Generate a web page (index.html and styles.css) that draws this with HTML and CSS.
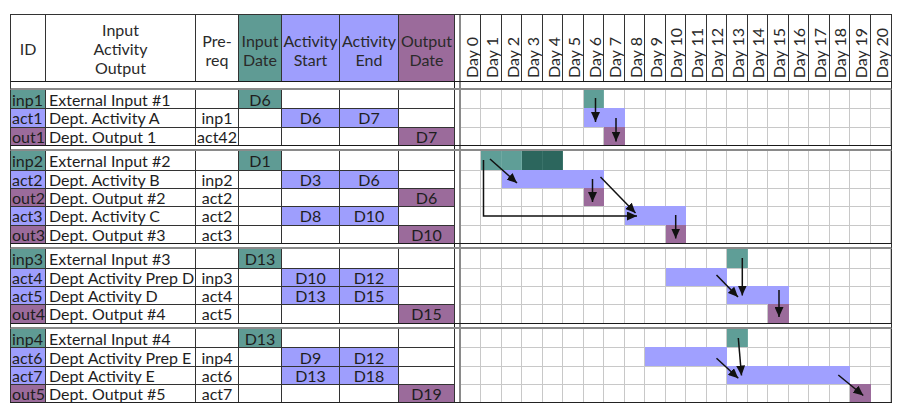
FILE: index.html
```html
<!DOCTYPE html>
<html lang="en">
<head>
<meta charset="utf-8">
<title>Department schedule</title>
<link rel="stylesheet" href="styles.css">
</head>
<body>
<div class="sheet">
  <div class="hrow">
    <div class="h">ID</div>
    <div class="h">Input<br>Activity<br>Output</div>
    <div class="h h2">Pre-<br>req</div>
    <div class="h h2 in">Input<br>Date</div>
    <div class="h h2 act">Activity<br>Start</div>
    <div class="h h2 act">Activity<br>End</div>
    <div class="h h2 out">Output<br>Date</div>
    <div class="gap hgap"></div>
    <div class="hdays">
      <div class="dh"><span>Day 0</span></div>
      <div class="dh"><span>Day 1</span></div>
      <div class="dh"><span>Day 2</span></div>
      <div class="dh"><span>Day 3</span></div>
      <div class="dh"><span>Day 4</span></div>
      <div class="dh"><span>Day 5</span></div>
      <div class="dh"><span>Day 6</span></div>
      <div class="dh"><span>Day 7</span></div>
      <div class="dh"><span>Day 8</span></div>
      <div class="dh"><span>Day 9</span></div>
      <div class="dh"><span>Day 10</span></div>
      <div class="dh"><span>Day 11</span></div>
      <div class="dh"><span>Day 12</span></div>
      <div class="dh"><span>Day 13</span></div>
      <div class="dh"><span>Day 14</span></div>
      <div class="dh"><span>Day 15</span></div>
      <div class="dh"><span>Day 16</span></div>
      <div class="dh"><span>Day 17</span></div>
      <div class="dh"><span>Day 18</span></div>
      <div class="dh"><span>Day 19</span></div>
      <div class="dh"><span>Day 20</span></div>
    </div>
  </div>
  <div class="sep hsep"><div class="sl"></div><div class="sg"></div><div></div></div>

  <div class="sec">
    <div class="row">
      <div class="c id in">inp1</div><div class="c name">External Input #1</div><div class="c"></div>
      <div class="c in">D6</div><div class="c"></div><div class="c"></div><div class="c"></div>
      <div class="gap"></div>
      <div class="days"><span class="bar t" style="grid-column:7 / span 1"></span></div>
    </div>
    <div class="row">
      <div class="c id act">act1</div><div class="c name">Dept. Activity A</div><div class="c">inp1</div>
      <div class="c"></div><div class="c act">D6</div><div class="c act">D7</div><div class="c"></div>
      <div class="gap"></div>
      <div class="days"><span class="bar a" style="grid-column:7 / span 2"></span></div>
    </div>
    <div class="row">
      <div class="c id out">out1</div><div class="c name">Dept. Output 1</div><div class="c">act42</div>
      <div class="c"></div><div class="c"></div><div class="c"></div><div class="c out">D7</div>
      <div class="gap"></div>
      <div class="days"><span class="bar o" style="grid-column:8 / span 1"></span></div>
    </div>
  </div>
  <div class="sep"><div class="sl"></div><div class="sg"></div><div></div></div>

  <div class="sec">
    <div class="row">
      <div class="c id in">inp2</div><div class="c name">External Input #2</div><div class="c"></div>
      <div class="c in">D1</div><div class="c"></div><div class="c"></div><div class="c"></div>
      <div class="gap"></div>
      <div class="days"><span class="bar t" style="grid-column:2 / span 1"></span><span class="bar t" style="grid-column:3 / span 1"></span><span class="bar dt" style="grid-column:4 / span 1"></span><span class="bar dt" style="grid-column:5 / span 1"></span></div>
    </div>
    <div class="row">
      <div class="c id act">act2</div><div class="c name">Dept. Activity B</div><div class="c">inp2</div>
      <div class="c"></div><div class="c act">D3</div><div class="c act">D6</div><div class="c"></div>
      <div class="gap"></div>
      <div class="days"><span class="bar a" style="grid-column:3 / span 5"></span></div>
    </div>
    <div class="row">
      <div class="c id out">out2</div><div class="c name">Dept. Output #2</div><div class="c">act2</div>
      <div class="c"></div><div class="c"></div><div class="c"></div><div class="c out">D6</div>
      <div class="gap"></div>
      <div class="days"><span class="bar o" style="grid-column:7 / span 1"></span></div>
    </div>
    <div class="row">
      <div class="c id act">act3</div><div class="c name">Dept. Activity C</div><div class="c">act2</div>
      <div class="c"></div><div class="c act">D8</div><div class="c act">D10</div><div class="c"></div>
      <div class="gap"></div>
      <div class="days"><span class="bar a" style="grid-column:9 / span 3"></span></div>
    </div>
    <div class="row">
      <div class="c id out">out3</div><div class="c name">Dept. Output #3</div><div class="c">act3</div>
      <div class="c"></div><div class="c"></div><div class="c"></div><div class="c out">D10</div>
      <div class="gap"></div>
      <div class="days"><span class="bar o" style="grid-column:11 / span 1"></span></div>
    </div>
  </div>
  <div class="sep"><div class="sl"></div><div class="sg"></div><div></div></div>

  <div class="sec">
    <div class="row">
      <div class="c id in">inp3</div><div class="c name">External Input #3</div><div class="c"></div>
      <div class="c in">D13</div><div class="c"></div><div class="c"></div><div class="c"></div>
      <div class="gap"></div>
      <div class="days"><span class="bar t" style="grid-column:14 / span 1"></span></div>
    </div>
    <div class="row">
      <div class="c id act">act4</div><div class="c name">Dept Activity Prep D</div><div class="c">inp3</div>
      <div class="c"></div><div class="c act">D10</div><div class="c act">D12</div><div class="c"></div>
      <div class="gap"></div>
      <div class="days"><span class="bar a" style="grid-column:11 / span 3"></span></div>
    </div>
    <div class="row">
      <div class="c id act">act5</div><div class="c name">Dept Activity D</div><div class="c">act4</div>
      <div class="c"></div><div class="c act">D13</div><div class="c act">D15</div><div class="c"></div>
      <div class="gap"></div>
      <div class="days"><span class="bar a" style="grid-column:14 / span 3"></span></div>
    </div>
    <div class="row">
      <div class="c id out">out4</div><div class="c name">Dept. Output #4</div><div class="c">act5</div>
      <div class="c"></div><div class="c"></div><div class="c"></div><div class="c out">D15</div>
      <div class="gap"></div>
      <div class="days"><span class="bar o" style="grid-column:16 / span 1"></span></div>
    </div>
  </div>
  <div class="sep"><div class="sl"></div><div class="sg"></div><div></div></div>

  <div class="sec last">
    <div class="row">
      <div class="c id in">inp4</div><div class="c name">External Input #4</div><div class="c"></div>
      <div class="c in">D13</div><div class="c"></div><div class="c"></div><div class="c"></div>
      <div class="gap"></div>
      <div class="days"><span class="bar t" style="grid-column:14 / span 1"></span></div>
    </div>
    <div class="row">
      <div class="c id act">act6</div><div class="c name">Dept Activity Prep E</div><div class="c">inp4</div>
      <div class="c"></div><div class="c act">D9</div><div class="c act">D12</div><div class="c"></div>
      <div class="gap"></div>
      <div class="days"><span class="bar a" style="grid-column:10 / span 4"></span></div>
    </div>
    <div class="row">
      <div class="c id act">act7</div><div class="c name">Dept Activity E</div><div class="c">act6</div>
      <div class="c"></div><div class="c act">D13</div><div class="c act">D18</div><div class="c"></div>
      <div class="gap"></div>
      <div class="days"><span class="bar a" style="grid-column:14 / span 6"></span></div>
    </div>
    <div class="row">
      <div class="c id out">out5</div><div class="c name">Dept. Output #5</div><div class="c">act7</div>
      <div class="c"></div><div class="c"></div><div class="c"></div><div class="c out">D19</div>
      <div class="gap"></div>
      <div class="days"><span class="bar o" style="grid-column:20 / span 1"></span></div>
    </div>
  </div>
</div>

<svg class="arrows" width="900" height="416" viewBox="0 0 900 416" aria-hidden="true">
  <defs>
    <marker id="ah" markerUnits="userSpaceOnUse" markerWidth="10" markerHeight="9" refX="10" refY="4.5" orient="auto">
      <path d="M0,0 L10,4.5 L0,9 Z" fill="#111"/>
    </marker>
  </defs>
  <g stroke="#111" stroke-width="1.5" fill="none" marker-end="url(#ah)">
    <line x1="595.5" y1="98" x2="595.5" y2="122"/>
    <line x1="616" y1="118" x2="616" y2="141.5"/>
    <line x1="490" y1="159" x2="517" y2="183"/>
    <polyline points="483.5,160 483.5,216 637,216"/>
    <line x1="592.5" y1="179" x2="592.5" y2="202"/>
    <line x1="600.5" y1="177" x2="635.5" y2="213"/>
    <line x1="675.7" y1="215" x2="675.7" y2="238.5"/>
    <line x1="742.3" y1="258" x2="742.3" y2="295.5"/>
    <line x1="716.5" y1="275" x2="738" y2="297"/>
    <line x1="779" y1="290" x2="779" y2="317"/>
    <line x1="738.3" y1="338" x2="741.5" y2="375.5"/>
    <line x1="716.5" y1="358.3" x2="738.3" y2="378.3"/>
    <line x1="838.3" y1="375" x2="863.3" y2="395.5"/>
  </g>
</svg>
</body>
</html>
```

FILE: styles.css
```css
* { box-sizing: border-box; }

body {
  margin: 0;
  padding: 14px 0 0 10px;
  width: 900px;
  height: 416px;
  overflow: hidden;
  position: relative;
  background: #ffffff;
  font-family: Lato, "Open Sans", sans-serif;
  font-size: 16px;
  color: #1e1e1e;
}

.sheet { width: 882px; }

.hrow,
.row {
  display: grid;
  grid-template-columns: 35px 150px 43px 43px 58px 59px 56px 6px 1fr;
  border-left: 1px solid #333;
  border-right: 1px solid #333;
}

.hrow {
  height: 67px;
  border-top: 1px solid #333;
}

.row { height: 18.3px; }

/* header */
.h {
  border-right: 1px solid #333;
  display: flex;
  align-items: center;
  justify-content: center;
  text-align: center;
  line-height: 19px;
  color: #2a2a2a;
}
.h2 { padding-top: 3px; }

.hgap { border-right-color: #555; }

.hdays {
  display: grid;
  grid-template-columns: repeat(21, 1fr);
}
.dh {
  border-right: 1px solid #333;
  display: flex;
  align-items: flex-end;
  justify-content: center;
  padding: 0 0 3px 2px;
  color: #2a2a2a;
}
.dh:last-child { border-right: 0; }
.dh span {
  writing-mode: vertical-rl;
  transform: rotate(180deg);
  line-height: 1;
  white-space: nowrap;
}

/* separators */
.sep {
  display: grid;
  grid-template-columns: 444px 6px 1fr;
  height: 6.5px;
  border-left: 1px solid #333;
  border-right: 1px solid #333;
  border-top: 1px solid #1a1a1a;
  border-bottom: 2px solid #8a8a8a;
}
.hsep { height: 9px; }
.sl { border-right: 1px solid #1a1a1a; }
.sg { border-right: 2px solid #8a8a8a; }

/* body cells */
.c {
  border-right: 1px solid #333;
  border-top: 1px solid #333;
  display: flex;
  align-items: center;
  justify-content: center;
  line-height: 1;
  white-space: nowrap;
  overflow: hidden;
  padding-top: 1px;
}
.sec .row:first-child .c { border-top: 0; }

.c.id { justify-content: flex-start; padding-left: 1px; }
.c.name { justify-content: flex-start; padding-left: 3px; }

.gap { border-right: 2px solid #8a8a8a; }

.in { background: #5f9b94; }
.act { background: #9e9efd; }
.out { background: #9b6b9b; }

.days {
  display: grid;
  grid-template-columns: repeat(21, 1fr);
  background:
    repeating-linear-gradient(90deg, transparent 0 19.476px, #c8c8c8 19.476px 20.476px),
    linear-gradient(#c8c8c8, #c8c8c8) top left / 100% 1px no-repeat;
}
.sec .row:first-child .days {
  background: repeating-linear-gradient(90deg, transparent 0 19.476px, #c8c8c8 19.476px 20.476px);
}

.bar { grid-row: 1; }
.bar.t { background: #5f9e97; border-right: 1px solid #6fa9a2; }
.bar.dt { background: #2c665d; border-right: 1px solid #3a736a; }
.bar.a { background: #a0a0ff; }
.bar.o { background: #9b6b9b; }

.sec.last { border-bottom: 1px solid #222; }

.arrows {
  position: absolute;
  left: 0;
  top: 0;
  pointer-events: none;
}
```
